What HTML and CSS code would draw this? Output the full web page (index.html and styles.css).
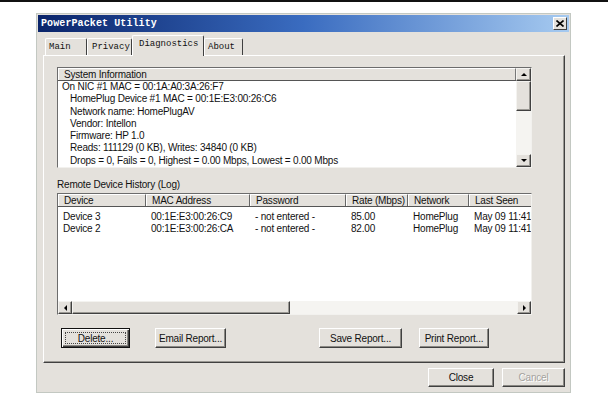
FILE: index.html
```html
<!DOCTYPE html>
<html lang="en">
<head>
    <meta charset="UTF-8">
    <meta name="viewport" content="width=device-width, initial-scale=1.0">
    <title>PowerPacket Utility</title>
    <link rel="stylesheet" href="styles.css">
</head>
<body>
    <div class="topline"></div>

    <div class="window">
        <!-- Title Bar -->
        <div class="titlebar">
            <span class="title">PowerPacket Utility</span>
            <span class="close-x">
                <svg width="8" height="7" viewBox="0 0 8 7"><path d="M0.5 0.5 L7.5 6.5 M7.5 0.5 L0.5 6.5" stroke="#000" stroke-width="1.6"/></svg>
            </span>
        </div>

        <!-- Tabs -->
        <div class="tabs">
            <div class="tab tab-main">Main</div>
            <div class="tab tab-privacy">Privacy</div>
            <div class="tab tab-diag active">Diagnostics</div>
            <div class="tab tab-about">About</div>
        </div>

        <!-- Diagnostics Panel -->
        <div class="panel">
            <div class="listbox sysinfo">
                <div class="list-main">
                    <div class="header"><div class="hcell">System Information</div></div>
                    <div class="info-lines">
                        <div>On NIC #1 MAC = 00:1A:A0:3A:26:F7</div>
                        <div class="indent">HomePlug Device #1 MAC = 00:1E:E3:00:26:C6</div>
                        <div class="indent">Network name: HomePlugAV</div>
                        <div class="indent">Vendor: Intellon</div>
                        <div class="indent">Firmware: HP 1.0</div>
                        <div class="indent">Reads: 111129 (0 KB), Writes: 34840 (0 KB)</div>
                        <div class="indent">Drops = 0, Fails = 0, Highest = 0.00 Mbps, Lowest = 0.00 Mbps</div>
                    </div>
                </div>
                <div class="vscroll">
                    <div class="sb-btn"><span class="arrow-up"></span></div>
                    <div class="sb-thumb-v"></div>
                    <div class="sb-track"></div>
                    <div class="sb-btn"><span class="arrow-down"></span></div>
                </div>
            </div>

            <div class="group-label">Remote Device History (Log)</div>

            <div class="listbox history">
                <div class="grid">
                    <div class="row header-row">
                        <div class="cell c-dev">Device</div>
                        <div class="cell c-mac">MAC Address</div>
                        <div class="cell c-pwd">Password</div>
                        <div class="cell c-rate">Rate (Mbps)</div>
                        <div class="cell c-net">Network</div>
                        <div class="cell c-seen">Last Seen</div>
                    </div>
                    <div class="rows">
                        <div class="row">
                            <div class="cell c-dev">Device 3</div>
                            <div class="cell c-mac">00:1E:E3:00:26:C9</div>
                            <div class="cell c-pwd">- not entered -</div>
                            <div class="cell c-rate">85.00</div>
                            <div class="cell c-net">HomePlug</div>
                            <div class="cell c-seen">May 09 11:41</div>
                        </div>
                        <div class="row">
                            <div class="cell c-dev">Device 2</div>
                            <div class="cell c-mac">00:1E:E3:00:26:CA</div>
                            <div class="cell c-pwd">- not entered -</div>
                            <div class="cell c-rate">82.00</div>
                            <div class="cell c-net">HomePlug</div>
                            <div class="cell c-seen">May 09 11:41</div>
                        </div>
                    </div>
                </div>
                <div class="hscroll">
                    <div class="sb-btn-h"><span class="arrow-left"></span></div>
                    <div class="sb-thumb-h"></div>
                    <div class="sb-track"></div>
                    <div class="sb-btn-h"><span class="arrow-right"></span></div>
                </div>
            </div>

            <div class="actions">
                <button class="btn btn-default btn-delete"><span class="focus">Delete...</span></button>
                <button class="btn btn-email">Email Report...</button>
                <button class="btn btn-save">Save Report...</button>
                <button class="btn btn-print">Print Report...</button>
            </div>
        </div>

        <!-- Dialog Buttons -->
        <div class="footer">
            <button class="btn btn-close">Close</button>
            <button class="btn btn-cancel" disabled>Cancel</button>
        </div>
    </div>
</body>
</html>
```

FILE: styles.css
```css
/* Base Styles */
* {
    margin: 0;
    padding: 0;
    box-sizing: border-box;
}
body {
    background-color: #fff;
    font-family: "Liberation Sans", Arial, sans-serif;
    font-size: 10px;
    letter-spacing: -0.2px;
    color: #111;
}
.topline {
    height: 2px;
    background-color: #111;
}
/* Window */
.window {
    width: 535px;
    height: 380px;
    margin: 11px 0 0 36px;
    padding: 1px;
    border: 1px solid #c3c8c2;
    background-color: #e4e1dc;
    display: flex;
    flex-direction: column;
}
/* Title Bar */
.titlebar {
    height: 17px;
    display: flex;
    align-items: center;
    justify-content: space-between;
    padding: 0 2px 0 3px;
    background: linear-gradient(to right, #0a246a 0%, #3a6cc0 50%, #a6caf0 100%);
}
.title {
    font-family: "Liberation Mono", "Courier New", monospace;
    font-weight: bold;
    font-size: 10px;
    letter-spacing: 0.1px;
    color: #fff;
}
.close-x {
    width: 14px;
    height: 13px;
    display: flex;
    align-items: center;
    justify-content: center;
    background-color: #e4e1dc;
    border: 1px solid;
    border-color: #fff #404040 #404040 #fff;
}
/* Tabs */
.tabs {
    height: 19px;
    margin: 4px 0 0 5px;
    padding-left: 2px;
    display: flex;
    align-items: flex-end;
    position: relative;
    z-index: 1;
}
.tab {
    height: 17px;
    font-family: "Liberation Mono", "Courier New", monospace;
    font-size: 9px;
    letter-spacing: 0;
    line-height: 16px;
    color: #111;
    border: 1px solid;
    border-color: #fff #404040 transparent #fff;
    border-bottom: none;
    border-radius: 2px 2px 0 0;
}
.tab-main { width: 42px; padding-left: 3px; }
.tab-privacy { width: 45px; padding-left: 4px; }
.tab-diag { width: 72px; padding-left: 6px; }
.tab-about { width: 39px; padding-left: 3px; }
.tab.active {
    height: 21px;
    margin-bottom: -1px;
    line-height: 17px;
    background-color: #e4e1dc;
}
/* Panel */
.panel {
    height: 308px;
    margin: 0 4px 0 5px;
    padding: 11px 0 0 13px;
    border: 1px solid;
    border-color: #fff #404040 #404040 #fff;
    box-shadow: inset -1px -1px #9a9893;
}
/* List Boxes */
.listbox {
    width: 475px;
    border: 1px solid;
    border-color: #6c6c6c #f2f1ee #f2f1ee #6c6c6c;
    background-color: #fff;
}
.sysinfo {
    height: 101px;
    display: flex;
}
.list-main {
    flex: 1;
}
.header {
    height: 13px;
    background-color: #e4e1dc;
    border-bottom: 1px solid #555;
}
.hcell {
    height: 12px;
    line-height: 12px;
    padding-left: 5px;
    border-top: 1px solid #fff;
    border-left: 1px solid #fff;
    border-right: 1px solid #777;
    line-height: 11px;
}
.info-lines {
    line-height: 12.3px;
    padding-left: 4px;
}
.info-lines .indent {
    padding-left: 8px;
}
/* Scrollbars */
.vscroll {
    width: 15px;
    display: flex;
    flex-direction: column;
}
.sb-btn, .sb-thumb-v, .sb-btn-h, .sb-thumb-h {
    background-color: #e4e1dc;
    border: 1px solid;
    border-color: #f4f3f0 #404040 #404040 #f4f3f0;
    box-shadow: inset -1px -1px #9a9893;
    display: flex;
    align-items: center;
    justify-content: center;
}
.sb-btn {
    height: 13px;
}
.sb-thumb-v {
    height: 30px;
}
.sb-track {
    flex: 1;
    background-color: #f5f4f1;
}
.arrow-up, .arrow-down, .arrow-left, .arrow-right {
    width: 0;
    height: 0;
    border: 3px solid transparent;
}
.arrow-up { border-bottom: 3px solid #000; border-top-width: 0; }
.arrow-down { border-top: 3px solid #000; border-bottom-width: 0; }
.arrow-left { border-right: 3px solid #000; border-left-width: 0; }
.arrow-right { border-left: 3px solid #000; border-right-width: 0; }
.group-label {
    height: 12px;
    line-height: 12px;
    margin: 11px 0 2px;
}
/* History Grid */
.history {
    height: 122px;
    display: flex;
    flex-direction: column;
}
.grid {
    flex: 1;
    overflow: hidden;
}
.row {
    display: flex;
    white-space: nowrap;
    height: 11.6px;
    line-height: 11.6px;
}
.header-row {
    height: 13px;
    line-height: 11px;
    background-color: #e4e1dc;
    border-bottom: 1px solid #555;
}
.header-row .cell {
    border-top: 1px solid #fff;
    border-left: 1px solid #fff;
    border-right: 1px solid #666;
}
.rows {
    padding-top: 4px;
}
.cell {
    flex: none;
    padding-left: 5px;
    overflow: hidden;
}
.c-dev { width: 88px; }
.c-mac { width: 104px; }
.c-pwd { width: 96px; }
.c-rate { width: 62px; }
.c-net { width: 61px; }
.c-seen { width: 80px; }
.hscroll {
    height: 13px;
    display: flex;
}
.sb-btn-h {
    width: 14px;
}
.sb-thumb-h {
    width: 218px;
}
/* Buttons */
.actions {
    display: flex;
    margin-top: 13px;
}
.btn {
    height: 20px;
    font-family: "Liberation Sans", Arial, sans-serif;
    font-size: 10px;
    letter-spacing: -0.2px;
    color: #111;
    background-color: #e4e1dc;
    border: 1px solid;
    border-color: #fff #404040 #404040 #fff;
    box-shadow: inset -1px -1px #8a8883;
    display: flex;
    align-items: center;
    justify-content: center;
}
.btn-default {
    border: 1px solid #111;
    box-shadow: inset 1px 1px #fff, inset -1px -1px #404040, inset -2px -2px #8a8883;
    padding: 3px;
}
.btn-default .focus {
    width: 100%;
    height: 100%;
    border: 1px dotted #444;
    display: flex;
    align-items: center;
    justify-content: center;
}
.btn-delete { width: 69px; margin-left: 4px; }
.btn-email { width: 71px; margin-left: 25px; }
.btn-save { width: 83px; margin-left: 93px; }
.btn-print { width: 70px; margin-left: 17px; }
/* Footer */
.footer {
    display: flex;
    justify-content: flex-end;
    gap: 8px;
    margin-top: 5px;
    padding-right: 4px;
}
.footer .btn {
    height: 19px;
}
.btn-close { width: 66px; }
.btn-cancel {
    width: 63px;
    color: #a4a29e;
    text-shadow: 1px 1px #fff;
}
```
